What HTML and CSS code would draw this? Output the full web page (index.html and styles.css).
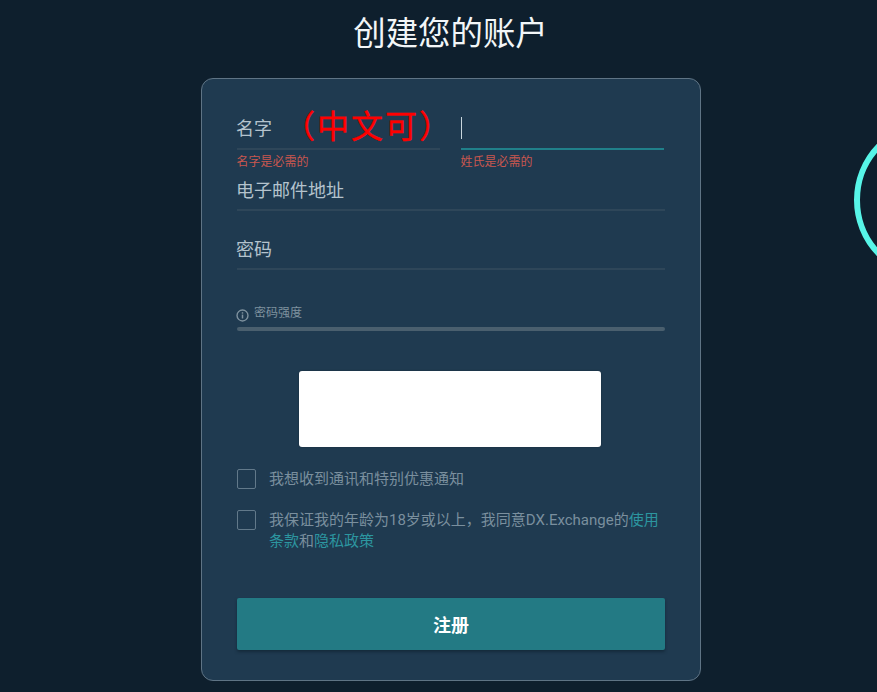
FILE: index.html
```html
<!DOCTYPE html>
<html lang="zh">
<head>
<meta charset="utf-8">
<title>创建您的账户</title>
<link rel="stylesheet" href="styles.css">
</head>
<body>
<div class="ring-clip"><div class="ring"></div></div>
<main class="page">
  <h1 class="title">创建您的账户</h1>
  <form class="card">
    <div class="name-row">
      <div class="name-field">
        <div class="input-line first-line">
          <span class="label">名字</span>
          <span class="note">（中文可）</span>
        </div>
        <div class="error">名字是必需的</div>
      </div>
      <div class="name-field">
        <div class="input-line active"><span class="caret"></span></div>
        <div class="error">姓氏是必需的</div>
      </div>
    </div>
    <div class="input-line email-line"><span class="label">电子邮件地址</span></div>
    <div class="input-line password-line"><span class="label">密码</span></div>
    <div class="strength">
      <svg class="info" viewBox="0 0 14 14" width="13" height="13" aria-hidden="true">
        <circle cx="7" cy="7" r="5.9" fill="none" stroke="#7f929f" stroke-width="1.5"/>
        <rect x="6.2" y="6" width="1.6" height="4.2" fill="#7f929f"/>
        <rect x="6.2" y="3.5" width="1.6" height="1.5" fill="#7f929f"/>
      </svg>
      <span class="strength-text">密码强度</span>
    </div>
    <div class="strength-bar"></div>
    <div class="captcha"></div>
    <label class="check first-check">
      <span class="box"></span>
      <span class="check-text">我想收到通讯和特别优惠通知</span>
    </label>
    <label class="check second-check">
      <span class="box"></span>
      <span class="check-text">我保证我的年龄为18岁或以上，我同意DX.Exchange的<a class="link">使用条款</a>和<a class="link">隐私政策</a></span>
    </label>
    <button class="submit" type="button">注册</button>
  </form>
</main>
</body>
</html>
```
FILE: styles.css
```css
* { box-sizing: border-box; }
html, body { margin: 0; height: 100%; }
body {
  position: relative;
  width: 877px;
  height: 692px;
  overflow: hidden;
  background: #0e1f2d;
  font-family: Roboto, "Noto Sans CJK SC", sans-serif;
}
.ring-clip {
  position: absolute;
  left: 854px;
  top: 120px;
  width: 23px;
  height: 160px;
  overflow: hidden;
}
.ring {
  width: 160px;
  height: 160px;
  border: 6px solid #57f5e8;
  border-radius: 50%;
}
.page {
  width: 500px;
  margin-left: 201px;
  display: flex;
  flex-direction: column;
}
.title {
  margin: 0 0 0 -1px;
  height: 78px;
  padding-top: 11px;
  font-size: 32.4px;
  line-height: 46px;
  font-weight: 400;
  color: #f2f6f8;
  text-align: center;
}
.card {
  height: 603px;
  padding: 0 35px;
  background: #1f3a50;
  border: 1px solid #5f7485;
  border-radius: 12px;
  display: flex;
  flex-direction: column;
}
.name-row {
  display: flex;
  gap: 21px;
  padding-top: 31px;
}
.name-field { width: 203px; }
.input-line {
  display: flex;
  align-items: center;
  height: 40px;
  border-bottom: 2px solid #2e4659;
}
.input-line.active { border-bottom-color: #20808a; }
.first-line { padding-bottom: 4px; }
.label {
  flex: none;
  margin-left: -1px;
  font-size: 18px;
  color: #b4c3cd;
  white-space: nowrap;
}
.note {
  flex: none;
  margin: -1px 0 0 11px;
  font-size: 32px;
  line-height: 36px;
  color: #f00;
  letter-spacing: 2px;
  white-space: nowrap;
  -webkit-text-stroke: 0.4px #f00;
}
.caret {
  width: 1px;
  height: 22px;
  margin-top: -2px;
  background: #c9d6dd;
}
.error {
  height: 20px;
  padding-top: 4px;
  margin-left: -0.5px;
  font-size: 12px;
  line-height: 16px;
  color: #c9574f;
}
.email-line { height: 41px; padding-bottom: 2px; }
.password-line { height: 59px; padding-top: 16px; }
.strength {
  display: flex;
  align-items: center;
  gap: 5px;
  margin-top: 34px;
  height: 16px;
  margin-left: -1px;
}
.info { margin-top: 6px; }
.strength-text {
  font-size: 12px;
  color: #7f929f;
  margin-top: -1px;
}
.strength-bar {
  height: 4px;
  margin-top: 7px;
  background: #4a5f6e;
  border-radius: 2px;
}
.captcha {
  align-self: center;
  width: 302px;
  height: 76px;
  margin: 40px 0 0 -2px;
  background: #fff;
  border-radius: 3px;
  box-shadow: 0 0 2px rgba(0, 0, 0, 0.3);
}
.check {
  display: flex;
  gap: 13px;
  font-size: 15px;
  line-height: 21px;
  color: #7a8f9e;
}
.first-check { margin-top: 22px; }
.second-check { margin-top: 20px; }
.box {
  flex: none;
  width: 19px;
  height: 20px;
  border: 1px solid #62798a;
  border-radius: 2px;
}
.check-text { width: 396px; }
.link { color: #2c96a0; }
.submit {
  margin-top: 46px;
  height: 52px;
  border: 0;
  border-radius: 2px;
  background: #237a84;
  box-shadow: 0 2px 3px rgba(14, 31, 45, 0.6);
  color: #fff;
  font-family: inherit;
  font-size: 18px;
  font-weight: 700;
}
```
